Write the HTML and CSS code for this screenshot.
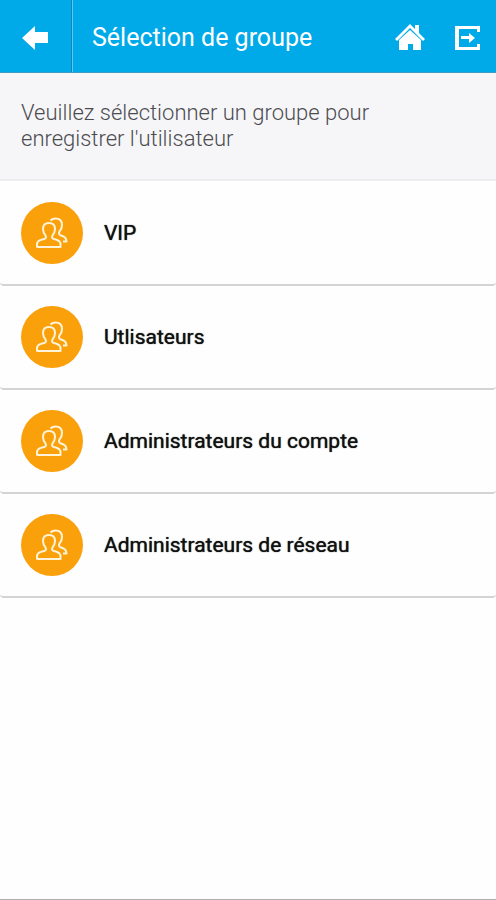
FILE: index.html
```html
<!DOCTYPE html>
<html lang="fr">
<head>
<meta charset="utf-8">
<meta name="viewport" content="width=device-width, initial-scale=1">
<title>Sélection de groupe</title>
<link rel="stylesheet" href="styles.css">
</head>
<body>
<svg class="sprite" aria-hidden="true">
  <symbol id="group" viewBox="0 0 32 32">
    <path d="M1 30V27C1 24 3 23 8 22C10 21.500 10.500 20.500 9.500 18.500C7.500 16 7 14.500 7 12C7 8.500 9 6 13 6S19 8.500 19 12C19 14.500 18.500 16 16.500 18.500C15.500 20.500 16 21.500 18 22C22.500 23 24.500 24 24.500 27V30Z"/>
    <path d="M14.500 3.500C16 2 17.500 1.500 19.500 1.500C23.500 1.500 26 4 26 8C26 10.500 25.500 12.500 23.500 14.500C22.500 16.500 23 17.500 25 18.500C29 19.500 30.500 21 30.500 24.500H27"/>
  </symbol>
</svg>
<header class="bar">
  <button class="bar-button back" type="button" aria-label="Retour">
    <svg width="28" height="24" viewBox="0 0 28 24" aria-hidden="true"><path d="M1 12L14 0V6H27V17H14V24Z"/></svg>
  </button>
  <h1 class="title">Sélection de groupe</h1>
  <nav class="actions">
    <a class="bar-button" href="#accueil" aria-label="Accueil">
      <svg width="32" height="28" viewBox="0 0 32 28" aria-hidden="true"><path d="M16 0L21 5V1H25V9L31 15L29 17L16 4L3 17L1 15Z"/><path d="M16 6L27 16V26H19V20H14V26H5V16Z"/></svg>
    </a>
    <a class="bar-button" href="#quitter" aria-label="Quitter">
      <svg width="26" height="26" viewBox="0 0 26 26" aria-hidden="true"><path d="M0 1H25V7H22V4H4V22H22V19H25V25H0Z"/><path d="M6 11H14V8L20 13L14 18V14H6Z"/></svg>
    </a>
  </nav>
</header>
<main>
  <p class="intro">Veuillez sélectionner un groupe pour enregistrer l'utilisateur</p>
  <ul class="groups">
    <li><button class="group" type="button"><span class="avatar"><svg class="people" aria-hidden="true"><use href="#group"/></svg></span>VIP</button></li>
    <li><button class="group" type="button"><span class="avatar"><svg class="people" aria-hidden="true"><use href="#group"/></svg></span>Utlisateurs</button></li>
    <li><button class="group" type="button"><span class="avatar"><svg class="people" aria-hidden="true"><use href="#group"/></svg></span>Administrateurs du compte</button></li>
    <li><button class="group" type="button"><span class="avatar"><svg class="people" aria-hidden="true"><use href="#group"/></svg></span>Administrateurs de réseau</button></li>
  </ul>
</main>
</body>
</html>
```
FILE: styles.css
```css
* { box-sizing: border-box; }

body {
  margin: 0;
  min-height: 100vh;
  border-bottom: 1px solid #b0b0b0;
  background: #fefefe;
  color: #111;
  font-family: Roboto, "Liberation Sans", sans-serif;
}

.sprite { position: absolute; width: 0; height: 0; }

.bar {
  display: flex;
  align-items: stretch;
  height: 73px;
  padding-right: 14px;
  border-bottom: 1px solid #3f9dc4;
  background: #00a9e8;
  color: #fff;
}

.bar-button {
  display: flex;
  align-items: center;
  justify-content: center;
  padding: 4px 0 0;
  border: 0;
  background: none;
  color: inherit;
}

.bar-button svg { fill: currentColor; }

.back {
  width: 73px;
  padding-right: 2px;
  border-right: 1px solid #5cc6ef;
  box-shadow: inset -1px 0 #1587b5;
}

.title {
  flex: 1;
  margin: 0;
  padding: 3px 0 0 19px;
  font-size: 25px;
  font-weight: 400;
  line-height: 70px;
  white-space: nowrap;
}

.actions { display: flex; gap: 28px; }
.actions .bar-button { min-width: 28px; }

.intro {
  margin: 0;
  padding: 27px 80px 27px 21px;
  border-bottom: 2px solid #ececee;
  background: #f6f6f9;
  color: #4c4c50;
  font-size: 22px;
  font-weight: 300;
  line-height: 26px;
}

.groups { margin: 0; padding: 1px 0 0; list-style: none; }

.group {
  display: flex;
  align-items: center;
  gap: 21px;
  width: 100%;
  height: 104px;
  padding: 0 21px;
  border: 0;
  border-bottom: 2px solid #d4d4d4;
  border-radius: 4px;
  background: #fefefe;
  color: inherit;
  font: 400 21px Roboto, "Liberation Sans", sans-serif;
  text-align: left;
  text-shadow: 0 0 1px #111;
}

.avatar {
  display: flex;
  flex: none;
  align-items: center;
  justify-content: center;
  width: 62px;
  height: 62px;
  border-radius: 50%;
  background: #f9a00b;
}

.people {
  width: 32px;
  height: 32px;
  overflow: visible;
  fill: none;
  stroke: #fff3d8;
  stroke-width: 2;
  stroke-linejoin: round;
}
```
